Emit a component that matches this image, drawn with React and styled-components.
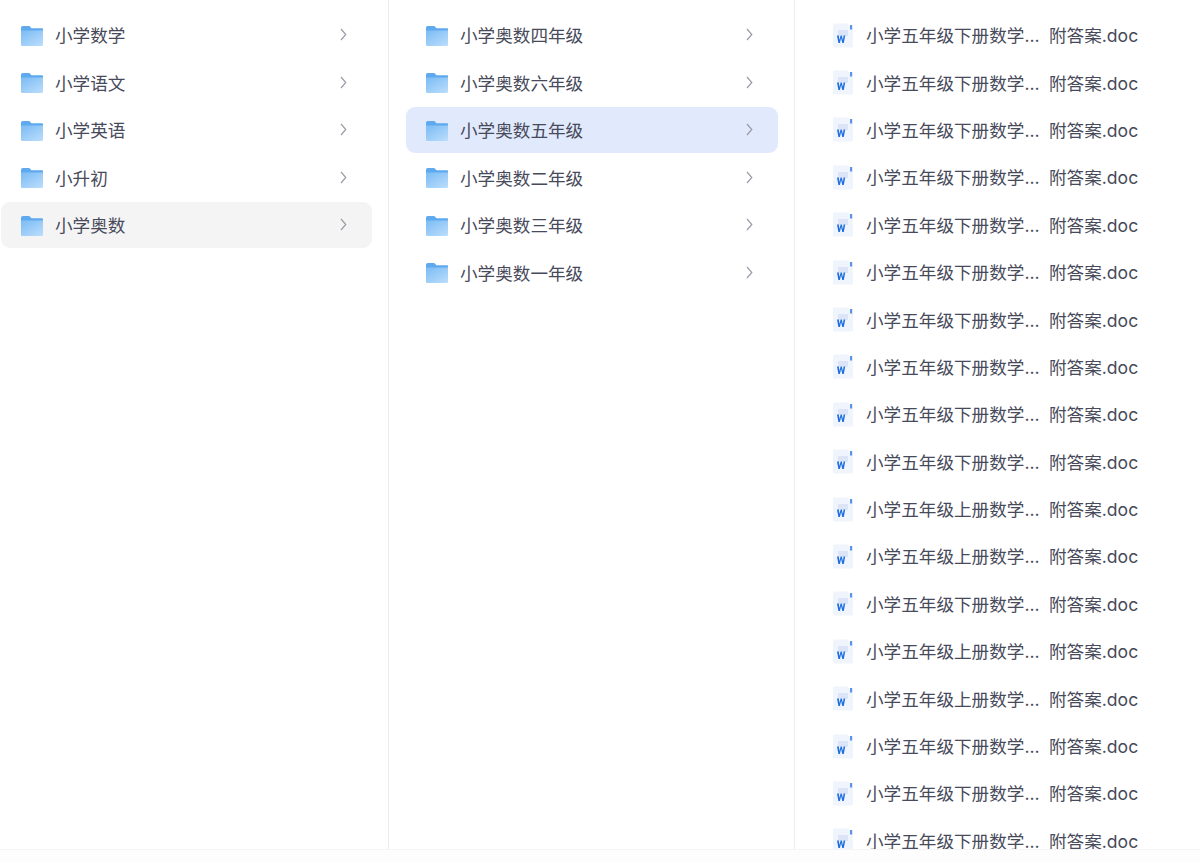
import React from 'react';
import styled, { createGlobalStyle } from 'styled-components';

const FIRST_LEVEL = ['小学数学', '小学语文', '小学英语', '小升初', '小学奥数'];
const SECOND_LEVEL = [
  '小学奥数四年级',
  '小学奥数六年级',
  '小学奥数五年级',
  '小学奥数二年级',
  '小学奥数三年级',
  '小学奥数一年级',
];
const TERMS = '下下下下下下下下下下上上下上上下下下'.split('');

function FolderIcon() {
  return (
    <IconBox>
      <svg width="24" height="22" viewBox="0 0 24 22">
        <defs>
          <linearGradient id="folderFront" x1="0.1" y1="0" x2="0.9" y2="1">
            <stop offset="0" stopColor="#7dbdf5" />
            <stop offset="1" stopColor="#b9dcfb" />
          </linearGradient>
        </defs>
        <path
          d="M1 3.2C1 1.9 1.7 1 3 1h5.6c.7 0 1.2.3 1.6.8l1.2 1.4H22c.7 0 1 .4 1 1v2H1z"
          fill="#5fa9ee"
        />
        <path
          d="M1 5.4h22v14c0 .9-.6 1.6-1.5 1.6h-19C1.6 21 1 20.300 1 19.400z"
          fill="url(#folderFront)"
        />
      </svg>
    </IconBox>
  );
}

function WordIcon() {
  return (
    <WordBox>
      <svg width="22" height="25" viewBox="0 0 22 25">
        <path
          d="M2.500 0.500H15.500L21 6V23c0 .9-.6 1.500-1.500 1.500H2.500C1.600 24.500 1 23.900 1 23V2c0-.9.6-1.500 1.500-1.500z"
          fill="#f0f4fc"
        />
        <rect x="6" y="7" width="10" height="6" fill="#dbe5f7" />
        <rect x="18" y="2" width="2.200" height="4.500" fill="#5b93e6" />
        <path
          d="M5 12.500l1.400 7.500h1.500l1.200-5 1.200 5h1.500l1.400-7.500h-1.600l-.7 4.600-1.100-4.600H8.600l-1.100 4.600-.7-4.600z"
          fill="#1f6fe0"
        />
      </svg>
    </WordBox>
  );
}

function Chevron() {
  return (
    <ChevronBox>
      <svg width="7" height="13" viewBox="0 0 7 13" fill="none">
        <path
          d="M1 1l4.800 5.500L1 12"
          stroke="#9a9ca6"
          strokeWidth="1.200"
        />
      </svg>
    </ChevronBox>
  );
}

export default function App() {
  return (
    <>
      <GlobalStyle />
      <Page>
        <Columns>
          <FirstColumn>
            {FIRST_LEVEL.map((name, index) => (
              <FolderRow key={name} $tone={index === 4 ? 'grey' : undefined}>
                <FolderIcon />
                <Name>{name}</Name>
                <Chevron />
              </FolderRow>
            ))}
          </FirstColumn>
          <SecondColumn>
            {SECOND_LEVEL.map((name, index) => (
              <FolderRow key={name} $tone={index === 2 ? 'blue' : undefined}>
                <FolderIcon />
                <Name>{name}</Name>
                <Chevron />
              </FolderRow>
            ))}
          </SecondColumn>
          <FileColumn>
            {TERMS.map((term, index) => (
              <FileRow key={index}>
                <WordIcon />
                <FileTitle>小学五年级{term}册数学...</FileTitle>
                <FileTail>附答案.doc</FileTail>
              </FileRow>
            ))}
          </FileColumn>
        </Columns>
        <Footer />
      </Page>
    </>
  );
}

const GlobalStyle = createGlobalStyle`
  html, body {
    margin: 0;
    padding: 0;
    height: 100%;
    overflow: hidden;
    background: #fff;
  }
`;

const Page = styled.div`
  display: flex;
  flex-direction: column;
  height: 863px;
  font-family: 'Inter', 'Noto Sans CJK SC', sans-serif;
  font-size: 17.600px;
  color: #474a5a;
`;

const Columns = styled.div`
  display: grid;
  grid-template-columns: 389px 406px 405px;
  height: 849px;
  overflow: hidden;
`;

const FirstColumn = styled.div`
  display: flex;
  flex-direction: column;
  gap: 2px;
  padding: 12px 16px 0 1px;
  border-right: 1px solid #ececef;
`;

const SecondColumn = styled(FirstColumn)`
  padding-left: 17px;
`;

const FileColumn = styled.div`
  display: flex;
  flex-direction: column;
  gap: 2px;
  padding: 12px 0 0 37px;
`;

const FolderRow = styled.div`
  display: flex;
  align-items: center;
  flex: none;
  height: 45.500px;
  padding: 0 25px 0 19px;
  border-radius: 9px;
  background: ${({ $tone }) =>
    $tone === 'grey' ? '#f4f4f5' : $tone === 'blue' ? '#e1e9fc' : 'transparent'};
`;

const FileRow = styled.div`
  display: flex;
  align-items: center;
  flex: none;
  height: 45.400px;
`;

const IconBox = styled.span`
  display: flex;
  flex: none;
  width: 24px;
  margin: 2px 11px 0 0;
`;

const WordBox = styled(IconBox)`
  margin: 1px 10px 0 0;
`;

const Name = styled.span`
  flex: 1;
  white-space: nowrap;
`;

const ChevronBox = styled.span`
  display: flex;
`;

const FileTitle = styled.span`
  width: 183px;
  white-space: nowrap;
`;

const FileTail = styled.span`
  white-space: nowrap;
`;

const Footer = styled.div`
  flex: 1;
  background: #fdfdfd;
  border-top: 1px solid #f5f5f6;
`;
